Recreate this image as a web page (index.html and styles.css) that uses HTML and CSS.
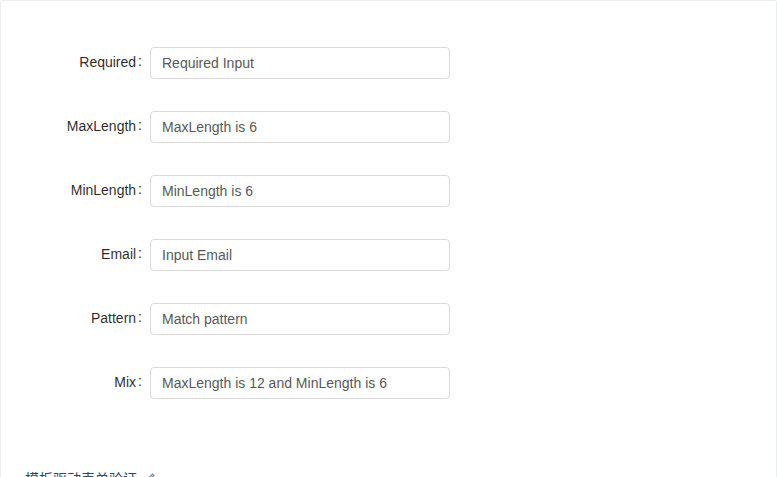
FILE: index.html
```html
<!DOCTYPE html>
<html lang="zh-CN">
<head>
    <meta charset="UTF-8">
    <meta name="viewport" content="width=device-width, initial-scale=1.0">
    <title>Form Validation</title>
    <link rel="stylesheet" href="styles.css">
</head>
<body>
    <section class="code-box">
        <div class="demo">
            <form class="form">
                <div class="form-item">
                    <label class="form-label" for="required">Required</label>
                    <input class="form-input" id="required" type="text" placeholder="Required Input">
                </div>
                <div class="form-item">
                    <label class="form-label" for="maxlength">MaxLength</label>
                    <input class="form-input" id="maxlength" type="text" placeholder="MaxLength is 6">
                </div>
                <div class="form-item">
                    <label class="form-label" for="minlength">MinLength</label>
                    <input class="form-input" id="minlength" type="text" placeholder="MinLength is 6">
                </div>
                <div class="form-item">
                    <label class="form-label" for="email">Email</label>
                    <input class="form-input" id="email" type="text" placeholder="Input Email">
                </div>
                <div class="form-item">
                    <label class="form-label" for="pattern">Pattern</label>
                    <input class="form-input" id="pattern" type="text" placeholder="Match pattern">
                </div>
                <div class="form-item">
                    <label class="form-label" for="mix">Mix</label>
                    <input class="form-input" id="mix" type="text" placeholder="MaxLength is 12 and MinLength is 6">
                </div>
            </form>
        </div>
        <div class="meta">
            <div class="meta-title">
                模板驱动表单验证
                <svg class="edit-icon" viewBox="0 0 16 16" width="14" height="14">
                    <path d="M3 13h10M4 10.5l7-7 1.5 1.5-7 7H4z" fill="none" stroke="currentColor" stroke-width="1.2"/>
                </svg>
            </div>
        </div>
    </section>
</body>
</html>
```

FILE: styles.css
```css
body {
    margin: 0;
    font-family: "Liberation Sans", Arial, "Noto Sans CJK SC", sans-serif;
    font-size: 14px;
    color: rgba(0, 0, 0, 0.65);
    background-color: white;
}
.code-box {
    width: 777px;
    box-sizing: border-box;
    border: 1px solid #ebedf0;
    border-radius: 2px;
}
.demo {
    padding: 42px 24px 50px;
}
.form-item {
    display: flex;
    align-items: center;
    height: 40px;
    margin-bottom: 24px;
}
.form-label {
    width: 125px;
    text-align: right;
    color: rgba(0, 0, 0, 0.85);
    line-height: 40px;
    margin-top: -2px;
}
.form-label::after {
    content: ":";
    margin: 0 8px 0 2px;
    position: relative;
    top: -1px;
}
.form-input {
    width: 300px;
    height: 32px;
    box-sizing: border-box;
    padding: 4px 11px;
    border: 1px solid #d9d9d9;
    border-radius: 4px;
    font-family: inherit;
    font-size: 14px;
    color: rgba(0, 0, 0, 0.65);
    outline: none;
}
.form-input::placeholder {
    color: #595959; /* placeholder shown in regular text colour */
}
.meta {
    position: relative;
    border-top: 1px dashed #ebedf0;
    margin-top: 8px;
    height: 40px;
}
.meta-title {
    position: absolute;
    top: -19px;
    left: 16px;
    padding: 1px 8px;
    background: white;
    color: #314659;
    font-size: 14px;
    display: flex;
    align-items: center;
    gap: 6px;
}
.edit-icon {
    color: #697b8c;
}
```
